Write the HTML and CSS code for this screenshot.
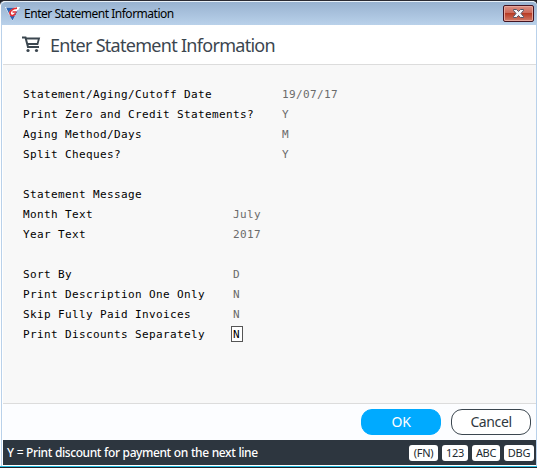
FILE: index.html
```
<!DOCTYPE html>
<html lang="en">
<head>
    <meta charset="utf-8">
    <title>Enter Statement Information</title>
    <link rel="stylesheet" href="styles.css">
</head>
<body>
<div class="window">
    <div class="titlebar">
        <svg class="logo" width="15" height="14" viewBox="0 0 15 14">
            <path d="M0 0h15L7.500 14z" fill="#fff"/>
            <path d="M1 0.500h9L5 3.500 4 6.500z" fill="#2b64b4"/>
            <path d="M4.500 8.500 7.500 13.500 13.500 2.500 10.500 5.500 9.500 9z" fill="#2b64b4"/>
            <path d="M12 1.200C7 1.500 4 4.500 5.200 7.200s3.500 1.500 5.300-0.700M7.500 5h4" fill="none" stroke="#e02c32" stroke-width="1.700"/>
        </svg>
        <span class="caption">Enter Statement Information</span>
        <button class="close" aria-label="Close">
            <svg width="13" height="11" viewBox="0 0 13 11">
                <path d="M1.500 1.500h3l2 2 2-2h3v1L9 5.500l2.500 3v1h-3l-2-2-2 2h-3v-1L4 5.500l-2.500-3z" fill="#f4f4f8" stroke="#535666"/>
            </svg>
        </button>
    </div>
    <div class="heading">
        <svg class="cart" width="19" height="17" viewBox="0 0 19 17">
            <path d="M0 1.500h3.500L6 11h11" fill="none" stroke="#3b464f" stroke-width="2"/>
            <path d="M4 2.500h13L15.500 8H5.500" fill="none" stroke="#3b464f" stroke-width="1.800"/>
            <circle cx="6" cy="14.500" r="1.600" fill="#3b464f"/>
            <circle cx="14.500" cy="14.500" r="1.600" fill="#3b464f"/>
        </svg>
        <h1>Enter Statement Information</h1>
    </div>
    <div class="form">
        <div class="row wide"><label>Statement/Aging/Cutoff Date</label><span class="value">19/07/17</span></div>
        <div class="row wide"><label>Print Zero and Credit Statements?</label><span class="value">Y</span></div>
        <div class="row wide"><label>Aging Method/Days</label><span class="value">M</span></div>
        <div class="row wide"><label>Split Cheques?</label><span class="value">Y</span></div>
        <div class="row group"><label>Statement Message</label></div>
        <div class="row"><label>Month Text</label><span class="value">July</span></div>
        <div class="row"><label>Year Text</label><span class="value">2017</span></div>
        <div class="row group"><label>Sort By</label><span class="value">D</span></div>
        <div class="row"><label>Print Description One Only</label><span class="value">N</span></div>
        <div class="row"><label>Skip Fully Paid Invoices</label><span class="value">N</span></div>
        <div class="row"><label>Print Discounts Separately</label><span class="value active">N</span></div>
    </div>
    <div class="buttons">
        <button class="btn ok">OK</button>
        <button class="btn cancel">Cancel</button>
    </div>
    <div class="status">
        <span class="hint">Y = Print discount for payment on the next line</span>
        <span class="key fn">(FN)</span>
        <span class="key num">123</span>
        <span class="key abc">ABC</span>
        <span class="key dbg">DBG</span>
    </div>
</div>
</body>
</html>
```
FILE: styles.css
```
* {
    box-sizing: border-box;
}
body {
    margin: 0;
    background: #202028;
    font-family: "Noto Sans", "Open Sans", sans-serif;
    overflow: hidden;
}
button {
    font-family: inherit;
    padding: 0;
}
.window {
    display: flex;
    flex-direction: column;
    width: 537px;
    height: 467px;
    padding: 0 1px 0 3px;
    background: linear-gradient(to right, #fff 1px, #b9d1ea 1px, #b9d1ea 2px, #fff 2px, #fff 536px, #b9d1ea 536px);
    border-top: 1px solid #2a2a32;
    border-bottom: 1px solid #27bde0;
    border-radius: 5px 5px 0 0;
}
.titlebar {
    display: flex;
    align-items: center;
    height: 24px;
    margin: 0 -1px 0 -2px;
    padding: 0 3px 0 4px;
    border-top: 1px solid #e8f0f8;
    border-radius: 5px 5px 0 0;
    background: linear-gradient(#98b2d0, #b9d1ea);
}
.caption {
    flex: 1;
    margin-left: 4px;
    font-size: 12px;
    line-height: 20px;
    letter-spacing: -0.48px;
    white-space: nowrap;
    color: #000;
}
.close {
    display: flex;
    align-items: center;
    justify-content: center;
    width: 31px;
    height: 17px;
    border: 1px solid #431422;
    border-radius: 2px;
    box-shadow: inset 0 0 0 1px #e6a59a;
    background: linear-gradient(#dc8f83 0%, #cc6a5b 45%, #b93c25 50%, #d07a68 100%);
}
.heading {
    display: flex;
    align-items: center;
    height: 40px;
    padding-left: 19px;
    border-bottom: 1px solid #dcdcdc;
    background: #fff;
}
h1 {
    margin: 0 0 0 9px;
    font-size: 18px;
    font-weight: normal;
    line-height: 24px;
    letter-spacing: -0.71px;
    white-space: nowrap;
    color: #3b464f;
}
.form {
    height: 339px;
    padding: 19px 0 0 20px;
    border-bottom: 1px solid #dcdcdc;
    background: #f8f8f8;
    font-family: "DejaVu Sans Mono", monospace;
    font-size: 11px;
    letter-spacing: 0.378px;
    color: #000;
}
.row {
    display: grid;
    grid-template-columns: 210px auto;
    justify-content: start;
    align-items: center;
    height: 20px;
    white-space: pre;
}
.wide {
    grid-template-columns: 259px auto;
}
.group {
    margin-top: 20px;
}
.value {
    color: #6b6b6b;
}
.active {
    width: 12px;
    height: 16px;
    margin-left: -2px;
    padding-left: 1px;
    border: 1px solid #555;
    background: #fff;
    line-height: 15px;
    color: #000;
}
.buttons {
    display: flex;
    justify-content: flex-end;
    gap: 10px;
    height: 36px;
    padding: 5px 5px 0 0;
    background: #fcfdff;
}
.btn {
    width: 80px;
    height: 26px;
    border-radius: 11px;
    font-size: 14px;
    line-height: 24px;
    letter-spacing: -0.4px;
}
.ok {
    border: 1px solid #00aaff;
    background: #00aaff;
    color: #fff;
}
.cancel {
    border: 1px solid #3b464f;
    background: #fff;
    color: #2f3940;
}
.status {
    display: flex;
    align-items: center;
    gap: 4px;
    height: 25px;
    padding: 0 2px 0 4px;
    background: #2d363f;
}
.hint {
    flex: 1;
    font-size: 12px;
    font-weight: 500;
    letter-spacing: -0.4px;
    word-spacing: 0.3px;
    white-space: nowrap;
    color: #fff;
}
.key {
    height: 16px;
    border-radius: 3px;
    background: #fff;
    font-size: 11px;
    line-height: 15px;
    letter-spacing: -0.3px;
    text-align: center;
    color: #222a30;
}
.fn {
    width: 29px;
}
.num {
    width: 26px;
}
.abc {
    width: 28px;
}
.dbg {
    width: 30px;
}
```
